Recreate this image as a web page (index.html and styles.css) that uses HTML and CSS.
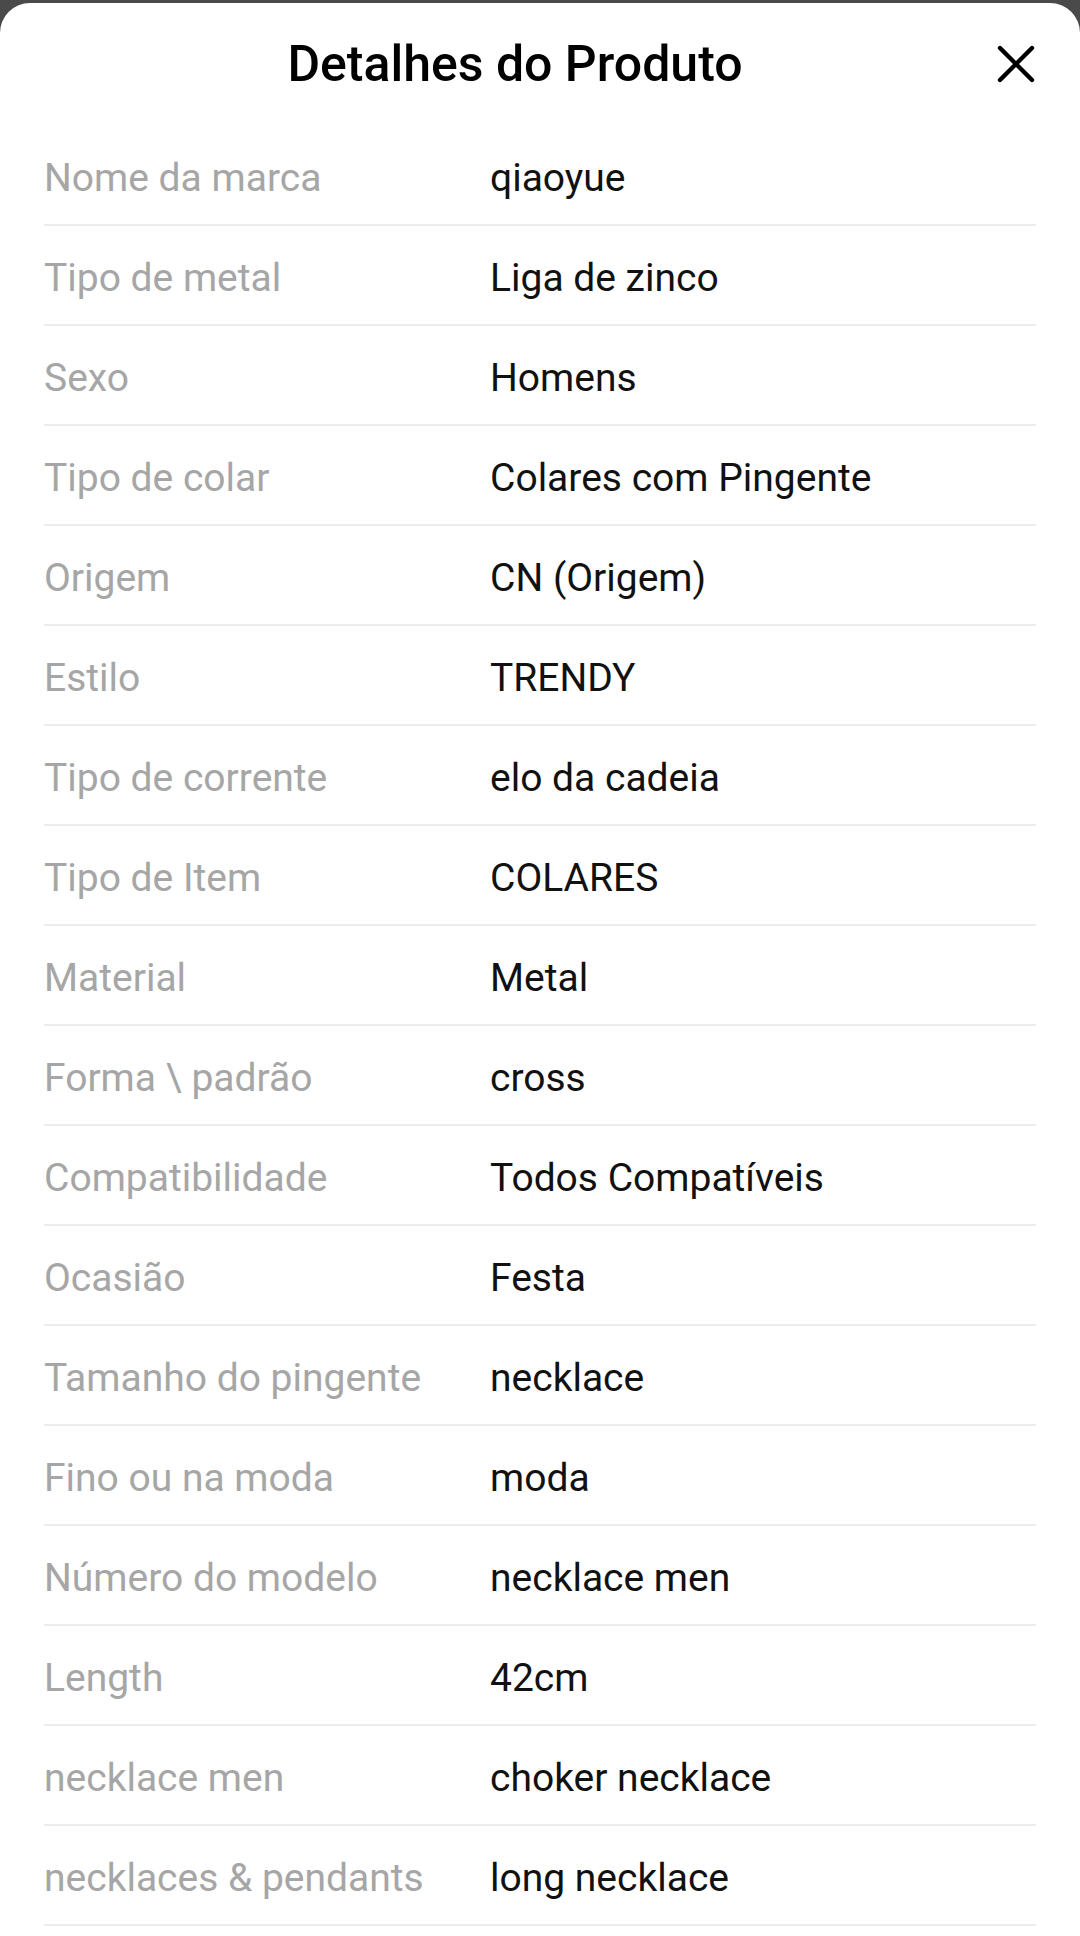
FILE: index.html
```html
<!DOCTYPE html>
<html lang="pt">
<head>
<meta charset="utf-8">
<title>Detalhes do Produto</title>
<link rel="stylesheet" href="styles.css">
</head>
<body>
<div class="sheet">
  <header class="header">
    <h1 class="title">Detalhes do Produto</h1>
    <button class="close" aria-label="Fechar">
      <svg viewBox="0 0 40 40" width="40" height="40"><path d="M4 4 L36 36 M36 4 L4 36" stroke="#000" stroke-width="4.4" stroke-linecap="round" fill="none"/></svg>
    </button>
  </header>
  <ul class="list">
    <li class="row"><span class="label">Nome da marca</span><span class="value">qiaoyue</span></li>
    <li class="row"><span class="label">Tipo de metal</span><span class="value">Liga de zinco</span></li>
    <li class="row"><span class="label">Sexo</span><span class="value">Homens</span></li>
    <li class="row"><span class="label">Tipo de colar</span><span class="value">Colares com Pingente</span></li>
    <li class="row"><span class="label">Origem</span><span class="value">CN (Origem)</span></li>
    <li class="row"><span class="label">Estilo</span><span class="value">TRENDY</span></li>
    <li class="row"><span class="label">Tipo de corrente</span><span class="value">elo da cadeia</span></li>
    <li class="row"><span class="label">Tipo de Item</span><span class="value">COLARES</span></li>
    <li class="row"><span class="label">Material</span><span class="value">Metal</span></li>
    <li class="row"><span class="label">Forma \ padrão</span><span class="value">cross</span></li>
    <li class="row"><span class="label">Compatibilidade</span><span class="value">Todos Compatíveis</span></li>
    <li class="row"><span class="label">Ocasião</span><span class="value">Festa</span></li>
    <li class="row"><span class="label">Tamanho do pingente</span><span class="value">necklace</span></li>
    <li class="row"><span class="label">Fino ou na moda</span><span class="value">moda</span></li>
    <li class="row"><span class="label">Número do modelo</span><span class="value">necklace men</span></li>
    <li class="row"><span class="label">Length</span><span class="value">42cm</span></li>
    <li class="row"><span class="label">necklace men</span><span class="value">choker necklace</span></li>
    <li class="row"><span class="label">necklaces &amp; pendants</span><span class="value">long necklace</span></li>
  </ul>
</div>
</body>
</html>
```
FILE: styles.css
```css
html, body {
  margin: 0;
  padding: 0;
}
body {
  background: #4a4a4a;
  font-family: Roboto, "Liberation Sans", sans-serif;
  height: 1936px;
  overflow: hidden;
}
.sheet {
  margin-top: 3px;
  background: #fff;
  border-radius: 30px 30px 0 0;
  padding: 0 44px;
  min-height: 1933px;
}
.header {
  height: 123px;
  display: flex;
  align-items: center;
  justify-content: center;
  position: relative;
  padding-right: 50px;
}
.title {
  margin: 0;
  font-size: 50px;
  font-weight: 500;
  color: #000;
  padding-bottom: 2px;
}
.close {
  position: absolute;
  right: 0;
  top: 41px;
  width: 40px;
  height: 40px;
  border: 0;
  padding: 0;
  background: none;
}
.close svg {
  display: block;
}
.list {
  list-style: none;
  margin: 0;
  padding: 0;
}
.row {
  box-sizing: content-box;
  height: 93px;
  padding-top: 5px;
  border-bottom: 2px solid #ececec;
  display: flex;
  align-items: center;
  font-size: 39px;
}
.label {
  width: 446px;
  flex: none;
  color: #a6a6a6;
}
.value {
  color: #111;
}
```
